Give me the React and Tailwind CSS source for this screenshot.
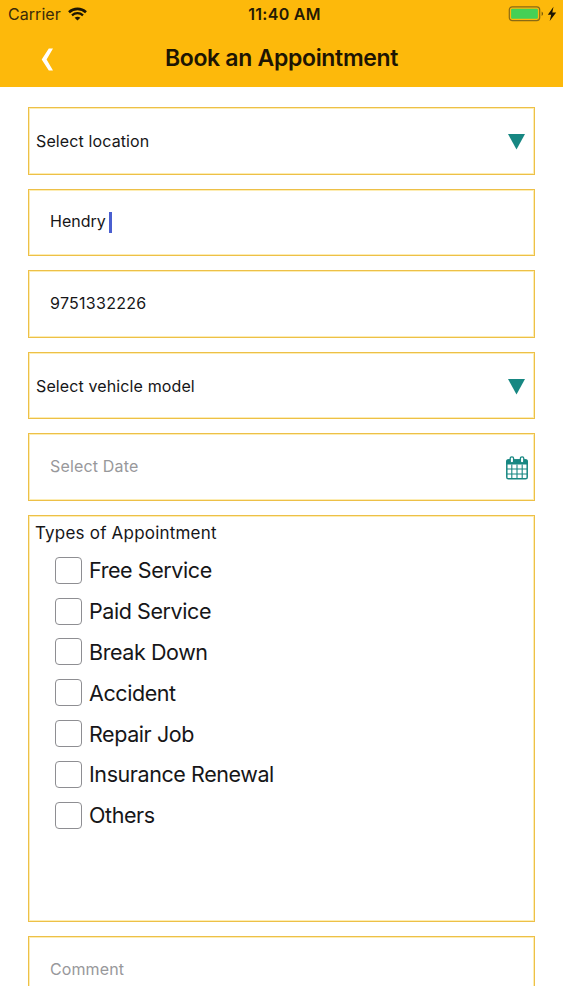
import React, { useState } from "react";

const appointmentTypes = [
  "Free Service",
  "Paid Service",
  "Break Down",
  "Accident",
  "Repair Job",
  "Insurance Renewal",
  "Others",
];

const box =
  "w-full shrink-0 border border-[#edc047] shadow-[inset_0_0_0_1px_#fdedb4]";

function StatusBar() {
  return (
    <div className="grid grid-cols-3 items-center h-7 pl-2 pr-1.5">
      <div className="flex items-center gap-[7px]">
        <span className="text-[16px] leading-5 tracking-[0.05px] text-[#3b2a08]">Carrier</span>
        <svg className="w-[19px] h-[14px]" viewBox="0 0 19 14" fill="none" stroke="#1d1503">
          <path d="M1 5.2C5.8 .8 13.2 .8 18 5.2" strokeWidth="2.6" />
          <path d="M4 8.3c3.2-2.8 7.8-2.8 11 0" strokeWidth="2.3" />
          <path d="M9.5 13.6 6.6 10.7c1.7-1.4 4.1-1.4 5.8 0z" fill="#1d1503" stroke="none" />
        </svg>
      </div>
      <span className="text-center text-[16px] leading-5 font-semibold tracking-[0.3px] text-[#241a05] pl-1">
        11:40 AM
      </span>
      <div className="flex items-center justify-end">
        <svg className="w-[49px] h-[16px]" viewBox="0 0 49 16">
          <rect x="1.3" y=".8" width="30.4" height="13.8" rx="3" fill="none" stroke="#8a6a14" strokeWidth="1.2" />
          <rect x="3.1" y="2.7" width="26.8" height="10" rx="1" fill="#45d055" />
          <path d="M33.7 5.5c1.7.8 1.7 3.6 0 4.4z" fill="#6b5008" />
          <path d="M45.5 .8 39.8 8.8h3.4L41.7 15 48.2 6.6h-3.9z" fill="#1d1503" />
        </svg>
      </div>
    </div>
  );
}

function SelectField({ label }) {
  return (
    <button
      type="button"
      className={`${box} h-[67.5px] flex items-center justify-between pl-[7px] pr-[9px] pt-[3px]`}
    >
      <span className="pb-0.5 text-[16px] leading-5 tracking-[0.12px] text-[#161618]">{label}</span>
      <svg className="w-[17px] h-[16px]" viewBox="0 0 17 16">
        <path d="M0 0h17L8.5 15.5z" fill="#178782" />
      </svg>
    </button>
  );
}

function CalendarIcon() {
  return (
    <svg className="mt-[3px] w-[22px] h-[24px]" viewBox="0 0 22 24" fill="none" stroke="#178782">
      <path d="M.3 8.5V5.4C.3 4 1 3.2 2.4 3.2h17.2c1.4 0 2.1.8 2.1 2.2v3.1z" fill="#178782" stroke="none" />
      <rect x=".8" y="4" width="20.4" height="18.8" rx="1.6" strokeWidth="1.5" />
      <path d="M5.8 8.5v14M11 8.5v14M16.2 8.5v14M1 13h20M1 18h20" strokeWidth="1.1" />
      <rect x="4.2" y=".8" width="3.4" height="6" rx="1.6" fill="#fff" strokeWidth="1.3" />
      <rect x="14.4" y=".8" width="3.4" height="6" rx="1.6" fill="#fff" strokeWidth="1.3" />
    </svg>
  );
}

export default function App() {
  const [selected, setSelected] = useState([]);

  const toggleType = (type) => {
    setSelected((prev) =>
      prev.includes(type) ? prev.filter((t) => t !== type) : [...prev, type],
    );
  };

  return (
    <div className="h-[1000px] w-full overflow-hidden bg-white font-['Inter',sans-serif]">
      {/* Header */}
      <header className="h-[87px] bg-[#fdb90b]">
        <StatusBar />
        <div className="grid grid-cols-[1fr_auto_1fr] items-center h-[59px]">
          <button type="button" className="ml-[41px] mt-1 w-3 h-[23px]">
            <svg className="w-3 h-[23px]" viewBox="0 0 12 23">
              <path d="M7.8.5H12L5.6 11.5 12 22.5H7.8L.7 11.5z" fill="#fff" />
            </svg>
          </button>
          <h1 className="text-[23px] leading-7 font-semibold tracking-[-0.32px] text-[#1d1503]">
            Book an Appointment
          </h1>
        </div>
      </header>

      {/* Booking form */}
      <main className="h-[899px] overflow-hidden px-7 pt-5 flex flex-col gap-3.5">
        <SelectField label="Select location" />

        <div className={`${box} h-[67.5px] flex items-center pl-[21px]`}>
          <span className="pb-0.5 text-[16px] leading-5 text-[#161618]">Hendry</span>
          <span className="ml-[3px] w-[3px] h-[21px] bg-[#4a5fd0]" />
        </div>

        <div className={`${box} h-[67.5px] flex items-center pl-[21px]`}>
          <span className="pb-0.5 text-[16px] leading-5 tracking-[0.27px] text-[#161618]">9751332226</span>
        </div>

        <SelectField label="Select vehicle model" />

        <div className={`${box} h-[67.5px] flex items-center justify-between pl-[21px] pr-[6px]`}>
          <span className="pb-0.5 text-[16px] leading-5 tracking-[0.16px] text-[#98989b]">Select Date</span>
          <CalendarIcon />
        </div>

        <section className={`${box} h-[407px] pt-[7px]`}>
          <h2 className="pl-[6px] text-[17px] leading-5 tracking-[0.2px] text-[#161618]">
            Types of Appointment
          </h2>
          <div className="pl-[26px] pt-[7.5px]">
            {appointmentTypes.map((type) => (
              <label key={type} className="flex items-center gap-[7px] h-[40.8px]">
                <input
                  type="checkbox"
                  checked={selected.includes(type)}
                  onChange={() => toggleType(type)}
                  className="appearance-none w-[27px] h-[27px] rounded-[4px] border border-[#8e8e92] bg-white checked:bg-[#178782]"
                />
                <span className="text-[21.5px] leading-7 tracking-[-0.42px] text-[#161618]">{type}</span>
              </label>
            ))}
          </div>
        </section>

        <div className={`${box} h-[67.5px] flex items-center pl-[21px]`}>
          <span className="pb-px text-[16px] leading-5 tracking-[0.1px] text-[#98989b]">Comment</span>
        </div>
      </main>
    </div>
  );
}
